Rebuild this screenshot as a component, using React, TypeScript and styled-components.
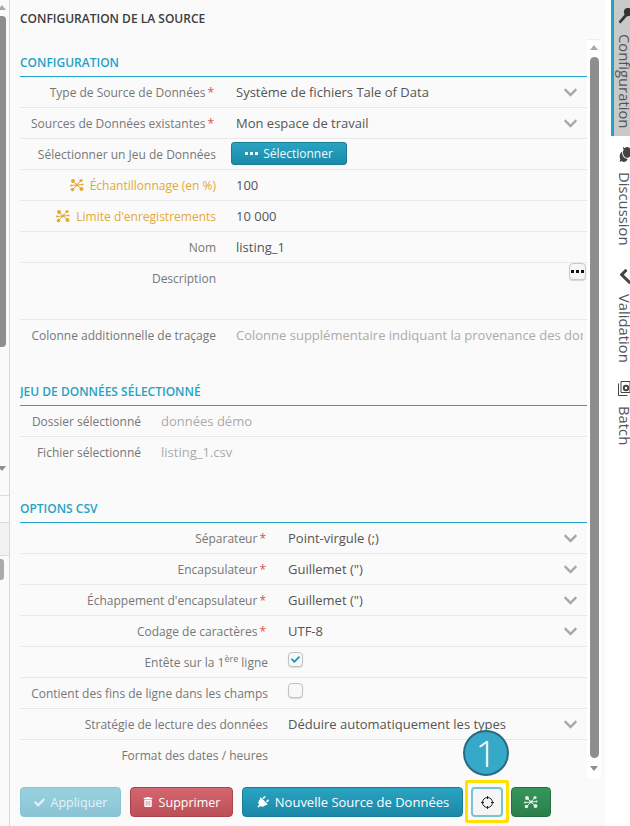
import React from 'react';
import styled, { createGlobalStyle } from 'styled-components';
import { FaCheck, FaChevronDown, FaComments, FaPlug, FaTrashAlt } from 'react-icons/fa';

const GlobalStyle = createGlobalStyle`
  html, body { margin: 0; padding: 0; background: #fff; }
  body { font-family: "Open Sans", "Liberation Sans", sans-serif; font-size: 12px; color: #555; }
`;

const Page = styled.div`
  position: relative;
  width: 630px;
  height: 826px;
  display: flex;
  overflow: hidden;
`;

const LeftStrip = styled.div`
  width: 9px;
  flex: none;
  border-right: 1px solid #d8d8d8;
  display: flex;
  flex-direction: column;
  background: #fafafa;
`;

const ArrowUp = styled.div`
  width: 0;
  height: 0;
  border-left: 4.5px solid transparent;
  border-right: 4.5px solid transparent;
  border-bottom: 5px solid #a8a8a8;
`;

const ArrowDown = styled.div`
  width: 0;
  height: 0;
  border-left: 4.5px solid transparent;
  border-right: 4.5px solid transparent;
  border-top: 5px solid #8e8e8e;
`;

const StripArrowUp = styled(ArrowUp)`
  margin: 5px 0 6px -2px;
`;

const StripThumb = styled.div`
  width: 6px;
  height: 331px;
  background: #8e8e8e;
  border-radius: 0 4px 4px 0;
`;

const StripArrow = styled(ArrowDown)`
  margin: 119px 0 0 -2px;
`;

const StripLine = styled.div<{ $top: number }>`
  margin-top: ${p => p.$top}px;
  height: 1px;
  background: #dcdcdc;
`;

const StripHeader = styled.div`
  height: 32px;
  background: #f2f2f2;
  border-bottom: 1px solid #dcdcdc;
`;

const StripHandle = styled.div`
  margin-top: 3px;
  width: 4px;
  height: 21px;
  background: #aaa;
  border-radius: 0 3px 3px 0;
`;

const Main = styled.div`
  width: 595px;
  flex: none;
  display: flex;
  flex-direction: column;
  background: #fafafa;
`;

const PanelTitle = styled.div`
  height: 39px;
  padding: 10px 0 0 10px;
  box-sizing: border-box;
  font-size: 12px;
  line-height: 17px;
  font-weight: 600;
  color: #3c3c3c;
`;

const Body = styled.div`
  height: 739px;
  display: flex;
  padding-left: 10px;
`;

const Content = styled.div`
  width: 567px;
  flex: none;
  overflow: hidden;
`;

const Scroll = styled.div`
  width: 14px;
  flex: none;
  margin-right: 4px;
  background: #fff;
  border-top: 1px solid #eee;
  box-sizing: border-box;
  display: flex;
  flex-direction: column;
  align-items: center;
`;

const ScrollThumb = styled.div`
  width: 9px;
  height: 701px;
  background: #8e8e8e;
  border-radius: 5px;
`;

const ScrollUp = styled(ArrowUp)`
  margin: 5px 0 7px 0;
`;

const ScrollDown = styled(ArrowDown)`
  margin: 8px 0 0 0;
`;

const SectionTitle = styled.div<{ $top: number }>`
  margin-top: ${p => p.$top}px;
  height: 22px;
  line-height: 17px;
  font-size: 12px;
  font-weight: 600;
  color: #1fa3c6;
  border-bottom: 1px solid #1fa3c6;
`;

const Row = styled.div<{ $h?: number; $plain?: boolean }>`
  height: ${p => p.$h ?? 30}px;
  display: flex;
  align-items: flex-start;
  border-bottom: 1px solid ${p => (p.$plain ? 'transparent' : '#e8e8e8')};
  position: relative;
`;

const Label = styled.div<{ $w: number; $warn?: boolean }>`
  width: ${p => p.$w}px;
  height: 30px;
  flex: none;
  line-height: 31px;
  font-size: 12px;
  white-space: nowrap;
  color: ${p => (p.$warn ? '#e3a934' : '#777')};
  display: flex;
  justify-content: flex-end;
  align-items: center;
  gap: 6px;
  sup { font-size: 9px; line-height: 0; }
`;

const Star = styled.span`
  color: #d9534f;
  margin-left: 2px;
  margin-right: 2px;
`;

const Value = styled.div<{ $light?: boolean }>`
  flex: 1;
  min-width: 0;
  margin: 0 4px 0 20px;
  line-height: 31px;
  font-size: 13px;
  white-space: nowrap;
  overflow: hidden;
  color: ${p => (p.$light ? '#aaa' : '#555')};
`;

const Chevron = styled(FaChevronDown)`
  position: absolute;
  right: 9px;
  top: 8px;
  width: 15px;
  height: 15px;
  color: #a8a8a8;
`;

const SmallButton = styled.button`
  margin: 3px 0 0 15px;
  width: 116px;
  height: 23px;
  border: 1px solid #197d99;
  border-radius: 3px;
  background: linear-gradient(#2aa3c2, #1c8aa9);
  color: #f2fbfd;
  font: 12px "Open Sans", sans-serif;
  display: flex;
  align-items: center;
  justify-content: center;
  gap: 5px;
  padding: 0;
`;

const DotsButton = styled.button`
  position: absolute;
  right: 1px;
  top: 0;
  width: 17px;
  height: 17px;
  padding: 0;
  border: 1px solid #c9c9c9;
  border-radius: 4px;
  background: #f6f6f6;
  color: #111;
  display: flex;
  align-items: center;
  justify-content: center;
  box-shadow: 0 1px 1px rgba(0, 0, 0, 0.15);
`;

const Check = styled.div`
  width: 13px;
  height: 13px;
  margin: 5px 0 0 20px;
  border: 1px solid #c2c2c2;
  border-radius: 4px;
  background: #f8f8f8;
  color: #1f94b5;
  display: flex;
  align-items: center;
  justify-content: center;
  box-shadow: 0 1px 1px rgba(0, 0, 0, 0.12);
`;

const Footer = styled.div`
  height: 48px;
  padding: 9px 0 0 10px;
  box-sizing: border-box;
  display: flex;
  gap: 9px;
`;

const Btn = styled.button<{ $w: number; $fs?: number; $kind: 'info' | 'faded' | 'danger' | 'ok' }>`
  width: ${p => p.$w}px;
  height: 30px;
  padding: 0;
  border-radius: 4px;
  font: ${p => p.$fs ?? 12.5}px "Open Sans", sans-serif;
  color: ${p => (p.$kind === 'faded' ? '#e3f3f7' : '#fff')};
  display: flex;
  align-items: center;
  justify-content: center;
  gap: 6px;
  border: 1px solid
    ${p => ({ info: '#197d99', faded: '#86c3d4', danger: '#a8434a', ok: '#226f40' }[p.$kind])};
  background: ${p =>
    ({
      info: 'linear-gradient(#2aa3c2, #1c88a7)',
      faded: 'linear-gradient(#99d1df, #8ac4d4)',
      danger: 'linear-gradient(#d4666f, #bc4f57)',
      ok: 'linear-gradient(#35965a, #2a7f4a)',
    }[p.$kind])};
`;

const PlugIcon = styled(FaPlug)`
  transform: rotate(45deg);
`;

const Highlight = styled.div`
  margin: -7px -7px 0 -7px;
  width: 44px;
  height: 43px;
  box-sizing: border-box;
  flex: none;
  border: 3px solid #ffe100;
  border-radius: 2px;
  padding: 4px 3px;
`;

const TargetButton = styled.button`
  width: 32px;
  height: 30px;
  padding: 0;
  box-sizing: border-box;
  border: 2px solid #7cc0d4;
  border-radius: 4px;
  background: #f5f5f5;
  display: flex;
  align-items: center;
  justify-content: center;
`;

const Badge = styled.div`
  position: absolute;
  left: 463px;
  top: 730px;
  width: 46px;
  height: 46px;
  box-sizing: border-box;
  border: 2px solid #2a6a80;
  border-radius: 50%;
  background: #36a9c9;
  color: #fff;
  font-size: 37px;
  font-weight: 300;
  line-height: 42px;
  text-align: center;
`;

const Gutter = styled.div`
  width: 6px;
  flex: none;
  background: #fff;
`;

const Tabs = styled.div`
  width: 19px;
  flex: none;
  display: flex;
  flex-direction: column;
  overflow: hidden;
`;

const Tab = styled.div<{ $active?: boolean; $h: number }>`
  height: ${p => p.$h}px;
  box-sizing: border-box;
  flex: none;
  width: 30px;
  padding: 8px 0 0 ${p => (p.$active ? 4 : 7)}px;
  margin-bottom: ${p => (p.$active ? 2 : 0)}px;
  border-left: ${p => (p.$active ? '3px solid #1fa3c6' : 'none')};
  background: ${p => (p.$active ? '#c9c9c9' : 'transparent')};
  display: flex;
  flex-direction: column;
  align-items: flex-start;
`;

const TabIcon = styled.div`
  height: 16px;
  margin-bottom: 10px;
  color: #444;
  display: flex;
  align-items: center;
`;

const CommentsIcon = styled(FaComments)`
  transform: rotate(90deg);
`;

const CheckIcon = styled(FaCheck)`
  transform: rotate(90deg);
`;

const TabText = styled.div`
  writing-mode: vertical-rl;
  font-size: 14.8px;
  line-height: 14px;
  color: #555;
  white-space: nowrap;
`;

const Spark = ({ color, size = 14 }: { color: string; size?: number }) => (
  <svg width={size} height={size} viewBox="0 0 14 14" fill="none" stroke={color} strokeWidth="1">
    <path d="M3 3 L7 7 L11 2.5 M7 7 L2.5 11.5 M7 7 L11.5 11 M7 7 L12.5 6.5 M7 7 L1 7.5" />
    <g fill={color} stroke="none">
      <circle cx="3" cy="3" r="2" />
      <circle cx="11" cy="2.5" r="1.6" />
      <circle cx="2.5" cy="11.5" r="1.8" />
      <circle cx="11.5" cy="11" r="2" />
      <circle cx="12.5" cy="6.5" r="1" />
      <circle cx="1" cy="7.5" r="1" />
      <circle cx="7" cy="7" r="1.4" />
    </g>
  </svg>
);

const Target = () => (
  <svg width="13" height="13" viewBox="0 0 13 13" fill="none" stroke="#222" strokeWidth="1">
    <circle cx="6.5" cy="6.5" r="5" />
    <path d="M6.5 0v3M6.5 10v3M0 6.5h3M10 6.5h3" />
  </svg>
);

const Dots = () => (
  <svg width="13" height="5" viewBox="0 0 13 5" fill="currentColor">
    <rect x="0" y="1" width="3" height="3" />
    <rect x="5" y="1" width="3" height="3" />
    <rect x="10" y="1" width="3" height="3" />
  </svg>
);

const MicIcon = () => (
  <svg width="13" height="16" viewBox="0 0 13 16" fill="#333">
    <circle cx="10" cy="4" r="4.2" />
    <path d="M7.5 5.5l2 2.2L2.4 15.6.6 13.8z" />
  </svg>
);

const BatchIcon = () => (
  <svg width="13" height="16" viewBox="0 0 13 16" fill="none" stroke="#444" strokeWidth="1">
    <path d="M3 1.5h9v11H3z" />
    <path d="M.5 3.5v12h9" />
    <circle cx="8" cy="8" r="2.2" strokeWidth="2" />
  </svg>
);

type SelectRowProps = { label: string; value: string; w: number; required?: boolean };

const SelectRow = ({ label, value, w, required = true }: SelectRowProps) => (
  <Row>
    <Label $w={w}>
      <span>
        {label}
        {required && <Star>*</Star>}
      </span>
    </Label>
    <Value>{value}</Value>
    <Chevron />
  </Row>
);

export default function App() {
  return (
    <Page>
      <GlobalStyle />
      <LeftStrip>
        <StripArrowUp />
        <StripThumb />
        <StripArrow />
        <StripLine $top={24} />
        <StripLine $top={26} />
        <StripHeader />
        <StripHandle />
      </LeftStrip>
      <Main>
        <PanelTitle>CONFIGURATION DE LA SOURCE</PanelTitle>
        <Body>
          <Content>
            <SectionTitle $top={15}>CONFIGURATION</SectionTitle>
            <SelectRow label="Type de Source de Données" value="Système de fichiers Tale of Data" w={196} />
            <SelectRow label="Sources de Données existantes" value="Mon espace de travail" w={196} />
            <Row>
              <Label $w={196}>Sélectionner un Jeu de Données</Label>
              <SmallButton>
                <Dots />
                Sélectionner
              </SmallButton>
            </Row>
            <Row>
              <Label $w={196} $warn>
                <Spark color="#e3a934" />
                Échantillonnage (en %)
              </Label>
              <Value>100</Value>
            </Row>
            <Row>
              <Label $w={196} $warn>
                <Spark color="#e3a934" />
                Limite d'enregistrements
              </Label>
              <Value>10 000</Value>
            </Row>
            <Row>
              <Label $w={196}>Nom</Label>
              <Value>listing_1</Value>
            </Row>
            <Row $h={56}>
              <Label $w={196}>Description</Label>
              <DotsButton>
                <Dots />
              </DotsButton>
            </Row>
            <Row $plain>
              <Label $w={196}>Colonne additionnelle de traçage</Label>
              <Value $light>Colonne supplémentaire indiquant la provenance des données</Value>
            </Row>

            <SectionTitle $top={32}>JEU DE DONNÉES SÉLECTIONNÉ</SectionTitle>
            <Row>
              <Label $w={121}>Dossier sélectionné</Label>
              <Value $light>données démo</Value>
            </Row>
            <Row $plain>
              <Label $w={121}>Fichier sélectionné</Label>
              <Value $light>listing_1.csv</Value>
            </Row>

            <SectionTitle $top={32}>OPTIONS CSV</SectionTitle>
            <SelectRow label="Séparateur" value="Point-virgule (;)" w={248} />
            <SelectRow label="Encapsulateur" value={'Guillemet (")'} w={248} />
            <SelectRow label="Échappement d'encapsulateur" value={'Guillemet (")'} w={248} />
            <SelectRow label="Codage de caractères" value="UTF-8" w={248} />
            <Row>
              <Label $w={248}>
                <span>
                  Entête sur la 1<sup>ère</sup> ligne
                </span>
              </Label>
              <Check>
                <FaCheck size={9} />
              </Check>
            </Row>
            <Row>
              <Label $w={248}>Contient des fins de ligne dans les champs</Label>
              <Check />
            </Row>
            <SelectRow
              label="Stratégie de lecture des données"
              value="Déduire automatiquement les types"
              w={248}
              required={false}
            />
            <Row $plain>
              <Label $w={248}>Format des dates / heures</Label>
            </Row>
          </Content>
          <Scroll>
            <ScrollUp />
            <ScrollThumb />
            <ScrollDown />
          </Scroll>
        </Body>
        <Footer>
          <Btn $w={101} $kind="faded">
            <FaCheck size={11} />
            Appliquer
          </Btn>
          <Btn $w={103} $kind="danger">
            <FaTrashAlt size={10} />
            Supprimer
          </Btn>
          <Btn $w={221} $fs={13} $kind="info">
            <PlugIcon size={13} />
            Nouvelle Source de Données
          </Btn>
          <Highlight>
            <TargetButton>
              <Target />
            </TargetButton>
          </Highlight>
          <Btn $w={40} $kind="ok">
            <Spark color="#dff3e6" />
          </Btn>
        </Footer>
      </Main>
      <Gutter />
      <Tabs>
        <Tab $active $h={136}>
          <TabIcon>
            <MicIcon />
          </TabIcon>
          <TabText>Configuration</TabText>
        </Tab>
        <Tab $h={122}>
          <TabIcon>
            <CommentsIcon size={15} />
          </TabIcon>
          <TabText>Discussion</TabText>
        </Tab>
        <Tab $h={112}>
          <TabIcon>
            <CheckIcon size={15} />
          </TabIcon>
          <TabText>Validation</TabText>
        </Tab>
        <Tab $h={80}>
          <TabIcon>
            <BatchIcon />
          </TabIcon>
          <TabText>Batch</TabText>
        </Tab>
      </Tabs>
      <Badge>1</Badge>
    </Page>
  );
}
